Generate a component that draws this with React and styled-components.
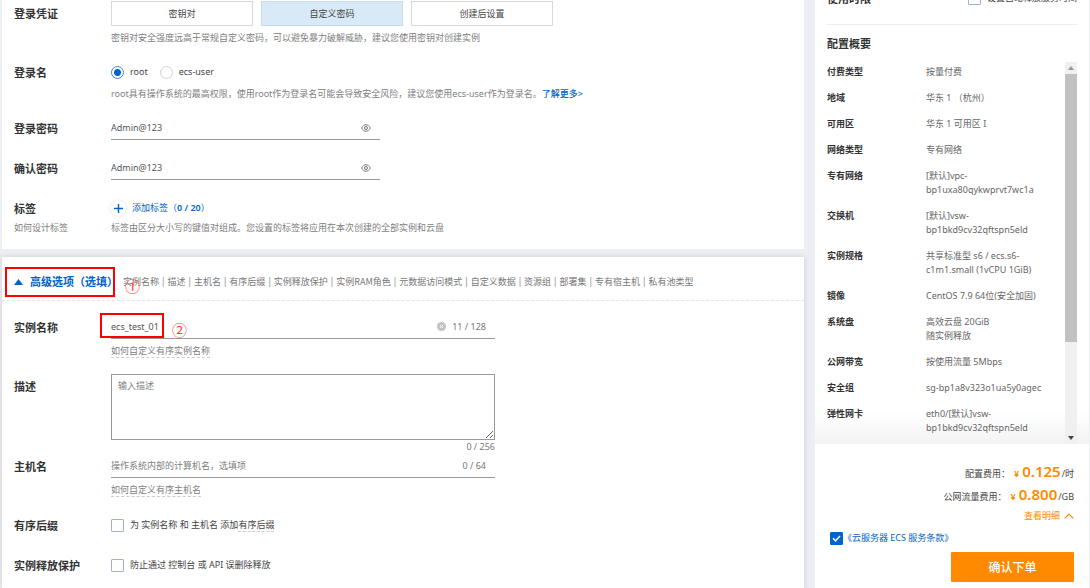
import React, { useState } from "react";
import styled, { createGlobalStyle, css } from "styled-components";

const Global = createGlobalStyle`
  *, *::before, *::after { box-sizing: border-box; }
  body {
    margin: 0;
    background: #eceef4;
    color: #555;
    font: 9px/14px "Noto Sans", "Noto Sans CJK SC", sans-serif;
  }
  button, input, textarea { font: inherit; color: inherit; }
  a { text-decoration: none; }
`;

const Page = styled.div`
  display: flex;
  gap: 11px;
  min-height: 100vh;
  padding: 0 1px 0 2px;
`;

const Main = styled.main`
  flex: 1;
  min-width: 0;
  display: flex;
  flex-direction: column;
  gap: 8px;
`;

const Panel = styled.section`
  background: #fff;
  padding: ${(p) => (p.$advanced ? "0" : "1px 12px 15px")};
  ${(p) =>
    p.$advanced &&
    css`
      flex: 1;
      box-shadow: 0 0 6px rgba(0, 0, 0, 0.14);
    `}
`;

const Rows = styled.div`
  display: flex;
  flex-direction: column;
  gap: 16px;
  padding: ${(p) => (p.$inset ? "14px 12px 8px" : "0")};
`;

const Row = styled.div`
  display: grid;
  grid-template-columns: 97px minmax(0, 1fr);
`;

const Stack = styled.div`
  display: flex;
  flex-direction: column;
`;

const labelText = css`
  height: 24px;
  font-size: 11px;
  line-height: 26px;
  font-weight: 700;
  color: #333;
`;
const Label = styled.label`
  ${labelText}
`;
const GroupLabel = styled.span`
  ${labelText}
`;

const Hint = styled.p`
  height: 14px;
  margin: ${(p) => p.$top || 0}px 0 0;
  line-height: 16px;
  white-space: nowrap;
  color: #808080;
`;

const HintLink = styled.a`
  display: block;
  width: fit-content;
  height: 14px;
  line-height: ${(p) => (p.$dashed ? 14 : 16)}px;
  margin-top: ${(p) => p.$top || 0}px;
  color: #808080;
  border-bottom: ${(p) => (p.$dashed ? "1px dashed #ccc" : "0")};
`;

const InlineTerm = styled.span`
  border-bottom: 1px dashed #ccc;
`;

const Link = styled.a`
  color: #0064c8;
  font-weight: ${(p) => (p.$strong ? 500 : 400)};
`;

const Segments = styled.div`
  display: flex;
  gap: 8px;
`;

const Segment = styled.button`
  width: 142px;
  height: 25px;
  padding: 0;
  border: 1px solid ${(p) => (p.$active ? "#c3dcef" : "#d8d9dc")};
  background: ${(p) => (p.$active ? "#d8eaf7" : "#fff")};
  color: #444;
`;

const Options = styled.div`
  display: flex;
  align-items: center;
  gap: 12px;
  height: 24px;
`;

const Option = styled.label`
  display: flex;
  align-items: center;
  gap: 6px;
  color: #444;
`;

const Radio = styled.input`
  appearance: none;
  width: 13px;
  height: 13px;
  margin: 0;
  border: 1px solid #d0d2d6;
  border-radius: 50%;
  background: #fff;
  &:checked {
    border-color: #3b86d8;
    background: radial-gradient(circle, #0064c8 3px, #fff 4px);
  }
`;

const Tick = styled.input`
  appearance: none;
  flex: none;
  width: 13px;
  height: 13px;
  margin: 0;
  border: 1px solid #9fb3cf;
  border-radius: 1px;
  background: #fff;
  &:checked {
    border-color: #0064c8;
    background: #0064c8;
  }
`;

const TickBox = styled.span`
  display: grid;
  place-items: center;
  & > * {
    grid-area: 1 / 1;
  }
  svg {
    pointer-events: none;
  }
`;

const Field = styled.div`
  display: flex;
  align-items: center;
  width: 100%;
  max-width: ${(p) => (p.$wide ? 384 : 269)}px;
  height: 24px;
  padding-right: 9px;
  border-bottom: 1px solid #999;
`;

const Input = styled.input`
  flex: 1;
  min-width: 0;
  height: 20px;
  padding: 0;
  border: 0;
  outline: 0;
  background: transparent;
  color: #555;
  &::placeholder {
    color: #808080;
    opacity: 1;
  }
`;

const IconButton = styled.button`
  display: flex;
  padding: 0;
  border: 0;
  background: none;
  color: ${(p) => (p.$pale ? "#c4c4c4" : "#777")};
  margin-right: ${(p) => (p.$pale ? 6 : 0)}px;
`;

const Counter = styled.span`
  color: #777;
`;

const TextBox = styled.textarea`
  display: block;
  width: 100%;
  height: 66px;
  padding: 4px 6px;
  border: 1px solid #999;
  outline: 0;
  resize: both;
  &::placeholder {
    color: #808080;
    opacity: 1;
  }
`;

const TextBoxWrap = styled.div`
  max-width: 384px;
  text-align: right;
`;

const AddTag = styled.button`
  display: flex;
  align-items: center;
  gap: 6px;
  width: fit-content;
  height: 24px;
  padding: 0;
  border: 0;
  background: none;
  color: #0064c8;
  b {
    font-weight: 600;
  }
`;

const PlusDisc = styled.span`
  display: flex;
  align-items: center;
  justify-content: center;
  width: 15px;
  height: 15px;
  border-radius: 50%;
  background: #fff;
  box-shadow: 0 0 4px rgba(0, 0, 0, 0.12);
`;

const AdvancedHead = styled.header`
  position: relative;
  display: flex;
  align-items: center;
  height: 44px;
  padding: 6px 12px 0;
  border-bottom: 1px dashed #e4e4e4;
`;

const Toggle = styled.button`
  display: flex;
  align-items: center;
  gap: 7px;
  width: 109px;
  padding: 0;
  border: 0;
  background: none;
  color: #0064c8;
  font-size: 11px;
  line-height: 24px;
  font-weight: 700;
  white-space: nowrap;
`;

const Topics = styled.span`
  display: flex;
  gap: 3px;
  color: #777;
  font-family: "Noto Sans CJK SC", sans-serif;
  white-space: nowrap;
`;

const Topic = styled.span`
  display: flex;
  gap: 3px;
  &:not(:last-child)::after {
    content: "|";
  }
`;

const Anchor = styled.div`
  position: relative;
`;

const Frame = styled.span`
  position: absolute;
  left: ${(p) => p.$x}px;
  top: ${(p) => p.$y}px;
  width: ${(p) => p.$w}px;
  height: ${(p) => p.$h}px;
  border: 2px solid #f00;
  pointer-events: none;
`;

const Marker = styled.span`
  position: absolute;
  left: ${(p) => p.$x}px;
  top: ${(p) => p.$y}px;
  color: #ff3b3b;
  font: 15px/16px "Noto Sans CJK SC", sans-serif;
  pointer-events: none;
`;

const Side = styled.aside`
  position: sticky;
  top: 0;
  flex: none;
  display: flex;
  flex-direction: column;
  width: 274px;
  height: 100vh;
  overflow: hidden;
  background: #fff;
`;

const Duration = styled.div`
  display: flex;
  align-items: center;
  justify-content: space-between;
  flex: none;
  height: 24px;
  margin: -14px 12px 14px;
  white-space: nowrap;
`;

const Title = styled.h2`
  flex: none;
  margin: 0 12px;
  padding: 7px 0 6px;
  border-top: 1px solid #ececec;
  font-size: 11px;
  line-height: 24px;
  font-weight: 700;
  color: #333;
`;

const Scroller = styled.div`
  flex: 1;
  min-height: 0;
  display: flex;
  padding: 0 12px;
  background: linear-gradient(to top, #f3f3f3, #fff 32px);
`;

const Details = styled.dl`
  flex: 1;
  min-width: 0;
  margin: 0;
  padding-top: 3px;
  overflow: hidden;
  display: flex;
  flex-direction: column;
  gap: 12px;
`;

const Detail = styled.div`
  display: grid;
  flex: none;
  grid-template-columns: 99px minmax(0, 1fr);
  dt {
    font-weight: 700;
    color: #333;
  }
  dd {
    margin: 0;
    white-space: pre-line;
    color: #666;
  }
`;

const Track = styled.div`
  display: flex;
  flex-direction: column;
  width: 12px;
  background: #f0f0f0;
`;

const Arrow = styled.span`
  display: flex;
  align-items: center;
  justify-content: center;
  height: 12px;
  color: ${(p) => (p.$dim ? "#999" : "#444")};
`;

const Thumb = styled.span`
  flex: 268;
  background: #c1c1c1;
`;
const Rest = styled.span`
  flex: 90;
`;

const Footer = styled.footer`
  flex: none;
  display: flex;
  flex-direction: column;
  align-items: flex-end;
  padding: 16px 15px 6px;
`;

const Price = styled.div`
  display: flex;
  align-items: baseline;
  height: 23px;
  line-height: 23px;
  color: #444;
`;

const Yen = styled.span`
  margin: 0 3px 0 4px;
  color: #ff8a00;
  font-weight: 700;
`;

const Amount = styled.strong`
  margin-right: 1px;
  color: #ff8a00;
  font-size: 15px;
  font-weight: 600;
`;

const More = styled.button`
  display: flex;
  align-items: center;
  gap: 4px;
  height: 20px;
  padding: 0;
  border: 0;
  background: none;
  color: #ff8a00;
`;

const Terms = styled.div`
  display: flex;
  align-items: center;
  align-self: stretch;
  height: 24px;
`;

const Submit = styled.button`
  width: 123px;
  height: 30px;
  margin-top: 2px;
  padding: 1px 0 0;
  border: 0;
  border-radius: 1px;
  background: #ff8a00;
  color: #fff;
  font-size: 12px;
  font-weight: 500;
`;

const Eye = () => (
  <svg width="10" height="8" viewBox="0 0 10 8" fill="none" stroke="currentColor">
    <path d="M.6 4C1.700 1.800 3.200.8 5 .8S8.300 1.800 9.400 4C8.300 6.200 6.800 7.200 5 7.200S1.700 6.200.6 4Z" />
    <circle cx="5" cy="4" r="1.500" />
  </svg>
);

const Clear = () => (
  <svg width="9" height="9" viewBox="0 0 9 9">
    <circle cx="4.500" cy="4.500" r="4.500" fill="currentColor" />
    <path d="M3 3l3 3M6 3L3 6" stroke="#fff" strokeWidth=".8" />
  </svg>
);

const Plus = () => (
  <svg width="9" height="9" viewBox="0 0 9 9">
    <path d="M4.500 0v9M0 4.500h9" stroke="#0064c8" strokeWidth="1.400" />
  </svg>
);

const Caret = ({ w = 9, h = 6, down }) => (
  <svg width={w} height={h} viewBox="0 0 9 6">
    <path d={down ? "M0 0h9L4.500 6z" : "M0 6h9L4.500 0z"} fill="currentColor" />
  </svg>
);

const Chevron = () => (
  <svg width="10" height="6" viewBox="0 0 10 6">
    <path d="M.7 5.300L5 1l4.300 4.300" fill="none" stroke="currentColor" strokeWidth="1.200" />
  </svg>
);

const Check = () => (
  <svg width="9" height="7" viewBox="0 0 9 7">
    <path d="M1 3.300l2.500 2.500L8 1" fill="none" stroke="#fff" strokeWidth="1.500" />
  </svg>
);

const credentials = ["密钥对", "自定义密码", "创建后设置"];

const topics = [
  "实例名称", "描述", "主机名", "有序后缀", "实例释放保护", "实例RAM角色",
  "元数据访问模式", "自定义数据", "资源组", "部署集", "专有宿主机", "私有池类型",
];

const details = [
  ["付费类型", "按量付费"],
  ["地域", "华东 1 （杭州）"],
  ["可用区", "华东 1 可用区 I"],
  ["网络类型", "专有网络"],
  ["专有网络", "[默认]vpc-\nbp1uxa80qykwprvt7wc1a"],
  ["交换机", "[默认]vsw-\nbp1bkd9cv32qftspn5eld"],
  ["实例规格", "共享标准型 s6 / ecs.s6-\nc1m1.small (1vCPU 1GiB)"],
  ["镜像", "CentOS 7.9 64位(安全加固)"],
  ["系统盘", "高效云盘 20GiB\n随实例释放"],
  ["公网带宽", "按使用流量 5Mbps"],
  ["安全组", "sg-bp1a8v323o1ua5y0agec"],
  ["弹性网卡", "eth0/[默认]vsw-\nbp1bkd9cv32qftspn5eld"],
];

function PasswordRow({ id, label }) {
  return (
    <Row>
      <Label htmlFor={id}>{label}</Label>
      <Field>
        <Input id={id} defaultValue="Admin@123" />
        <IconButton type="button" aria-label="显示密码"><Eye /></IconButton>
      </Field>
    </Row>
  );
}

export default function App() {
  const [credential, setCredential] = useState(1);
  return (
    <>
      <Global />
      <Page>
        <Main>
          <Panel>
            <Rows>
              <Row>
                <GroupLabel>登录凭证</GroupLabel>
                <Stack>
                  <Segments>
                    {credentials.map((name, i) => (
                      <Segment key={name} type="button" $active={i === credential} onClick={() => setCredential(i)}>
                        {name}
                      </Segment>
                    ))}
                  </Segments>
                  <Hint $top={4}>密钥对安全强度远高于常规自定义密码，可以避免暴力破解威胁，建议您使用密钥对创建实例</Hint>
                </Stack>
              </Row>
              <Row>
                <GroupLabel>登录名</GroupLabel>
                <Stack>
                  <Options>
                    <Option><Radio type="radio" name="login" defaultChecked />root</Option>
                    <Option><Radio type="radio" name="login" />ecs-user</Option>
                  </Options>
                  <Hint $top={2}>
                    root具有操作系统的最高权限，使用root作为登录名可能会导致安全风险，建议您使用ecs-user作为登录名。
                    <Link href="#more" $strong>了解更多&gt;</Link>
                  </Hint>
                </Stack>
              </Row>
              <PasswordRow id="password" label="登录密码" />
              <PasswordRow id="confirm" label="确认密码" />
              <Row>
                <Stack>
                  <GroupLabel>标签</GroupLabel>
                  <HintLink href="#tags">如何设计标签</HintLink>
                </Stack>
                <Stack>
                  <AddTag type="button">
                    <PlusDisc><Plus /></PlusDisc>
                    <span>添加标签（<b>0 / 20</b>）</span>
                  </AddTag>
                  <Hint>标签由区分大小写的键值对组成。您设置的标签将应用在本次创建的全部实例和云盘</Hint>
                </Stack>
              </Row>
            </Rows>
          </Panel>

          <Panel $advanced>
            <AdvancedHead>
              <Toggle type="button"><Caret />高级选项（选填）</Toggle>
              <Topics>
                {topics.map((topic) => (
                  <Topic key={topic}>{topic}</Topic>
                ))}
              </Topics>
              <Frame $x={3} $y={10} $w={110} $h={30} />
              <Marker $x={123} $y={21}>①</Marker>
            </AdvancedHead>
            <Rows $inset>
              <Row>
                <Label htmlFor="instance">实例名称</Label>
                <Anchor>
                  <Field $wide>
                    <Input id="instance" defaultValue="ecs_test_01" />
                    <IconButton type="button" $pale aria-label="清除"><Clear /></IconButton>
                    <Counter>11 / 128</Counter>
                  </Field>
                  <HintLink href="#instance-help" $top={5} $dashed>如何自定义有序实例名称</HintLink>
                  <Frame $x={-11} $y={-2} $w={64} $h={25} />
                  <Marker $x={61} $y={7}>②</Marker>
                </Anchor>
              </Row>
              <Stack>
                <Row>
                  <Label htmlFor="description">描述</Label>
                  <TextBoxWrap>
                    <TextBox id="description" placeholder="输入描述" />
                    <Counter>0 / 256</Counter>
                  </TextBoxWrap>
                </Row>
                <Row>
                  <Label htmlFor="host">主机名</Label>
                  <Stack>
                    <Field $wide>
                      <Input id="host" placeholder="操作系统内部的计算机名，选填项" />
                      <Counter>0 / 64</Counter>
                    </Field>
                    <HintLink href="#host-help" $top={5} $dashed>如何自定义有序主机名</HintLink>
                  </Stack>
                </Row>
              </Stack>
              <Row>
                <GroupLabel>有序后缀</GroupLabel>
                <Options>
                  <Option>
                    <Tick type="checkbox" />
                    <span>为 实例名称 和 主机名 添加<InlineTerm>有序后缀</InlineTerm></span>
                  </Option>
                </Options>
              </Row>
              <Row>
                <GroupLabel>实例释放保护</GroupLabel>
                <Options>
                  <Option><Tick type="checkbox" />防止通过 控制台 或 API 误删除释放</Option>
                </Options>
              </Row>
            </Rows>
          </Panel>
        </Main>

        <Side>
          <Duration>
            <GroupLabel>使用时限</GroupLabel>
            <Option><Tick type="checkbox" />设置自动释放服务时间</Option>
          </Duration>
          <Title>配置概要</Title>
          <Scroller>
            <Details>
              {details.map(([name, value]) => (
                <Detail key={name}>
                  <dt>{name}</dt>
                  <dd>{value}</dd>
                </Detail>
              ))}
            </Details>
            <Track aria-hidden="true">
              <Arrow $dim><Caret w={6} h={4} /></Arrow>
              <Thumb />
              <Rest />
              <Arrow><Caret w={6} h={4} down /></Arrow>
            </Track>
          </Scroller>
          <Footer>
            <Price>配置费用：<Yen>¥</Yen><Amount>0.125</Amount>/时</Price>
            <Price>公网流量费用：<Yen>¥</Yen><Amount>0.800</Amount>/GB</Price>
            <More type="button">查看明细<Chevron /></More>
            <Terms>
              <TickBox>
                <Tick type="checkbox" id="terms" defaultChecked aria-label="同意服务条款" />
                <Check />
              </TickBox>
              <Link href="#terms-of-service">《云服务器 ECS 服务条款》</Link>
            </Terms>
            <Submit type="button">确认下单</Submit>
          </Footer>
        </Side>
      </Page>
    </>
  );
}
